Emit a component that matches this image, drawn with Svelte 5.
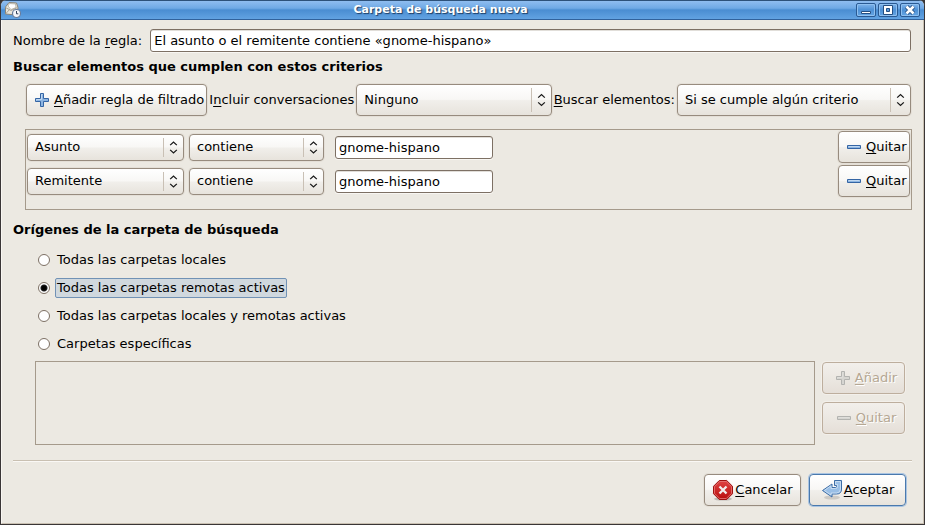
<script>
  let ruleName = $state('El asunto o el remitente contiene «gnome-hispano»');
  let thread = $state('Ninguno');
  let match = $state('Si se cumple algún criterio');
  let source = $state('remote');

  let rules = $state([
    { id: 1, field: 'Asunto', op: 'contiene', value: 'gnome-hispano' },
    { id: 2, field: 'Remitente', op: 'contiene', value: 'gnome-hispano' }
  ]);
  let nextId = 3;

  const sources = [
    { id: 'local', label: 'Todas las carpetas locales' },
    { id: 'remote', label: 'Todas las carpetas remotas activas' },
    { id: 'both', label: 'Todas las carpetas locales y remotas activas' },
    { id: 'specific', label: 'Carpetas específicas' }
  ];

  function addRule() {
    rules.push({ id: nextId++, field: 'Asunto', op: 'contiene', value: '' });
  }
  function removeRule(id) {
    rules = rules.filter((r) => r.id !== id);
  }
</script>

{#snippet arrows()}
  <svg class="arrows" width="20" height="14" viewBox="0 0 20 14" aria-hidden="true">
    <path d="M6.5 4.5 10 1.3l3.5 3.2M6.5 9.5l3.5 3.2 3.5-3.2" fill="none" stroke="#1a1a1a" stroke-width="1.4" />
  </svg>
{/snippet}

{#snippet plus()}
  <svg class="icon" width="16" height="16" viewBox="0 0 16 16" aria-hidden="true">
    <path class="sign" d="M6.5 1.5h3v5h5v3h-5v5h-3v-5h-5v-3h5z" />
    <path class="shine" d="M7.5 2.5h1M7.5 2.5v5h-5v1" />
  </svg>
{/snippet}

{#snippet minus()}
  <svg class="icon" width="16" height="16" viewBox="0 0 16 16" aria-hidden="true">
    <path class="sign" d="M1.5 6.5h13v3h-13z" />
    <path class="shine" d="M2.5 7.5h11" />
  </svg>
{/snippet}

<div class="window">
  <header class="titlebar">
    <svg class="appicon" width="18" height="18" viewBox="0 0 18 18" aria-hidden="true">
      <path d="M1.5 6 5 1.500l7.500.5 1.500 4.500-1 7.500-11.500-1z" fill="#e9e6dc" stroke="#8b8577" />
      <path d="m4 5 1.500-2.500 6 .5.500 3.500-5 2z" fill="#fff" stroke="#a9a699" stroke-width=".7" />
      <path d="M1.500 6.500 7 9.500l6.500-3M1.500 13l4-4.500" fill="none" stroke="#a19c8e" stroke-width=".9" />
      <circle cx="12.500" cy="12.500" r="4" fill="#f4f6fa" stroke="#667b9c" stroke-width="1.200" />
      <path d="M12.500 10v2.800h1.800" fill="none" stroke="#33405a" />
    </svg>
    <h1>Carpeta de búsqueda nueva</h1>
    <div class="controls">
      <button type="button" aria-label="Minimizar">
        <svg width="18" height="12" viewBox="0 0 18 12"><path d="M4.5 7.5h9v2h-9z" fill="#fff" stroke="#254f82" /></svg>
      </button>
      <button type="button" aria-label="Maximizar">
        <svg width="18" height="12" viewBox="0 0 18 12">
          <path d="M4.5 1.5h9v9h-9z" fill="#fff" stroke="#254f82" />
          <path d="M7.5 4.5h3v3h-3z" fill="#5b9bdd" stroke="#254f82" />
        </svg>
      </button>
      <button type="button" aria-label="Cerrar">
        <svg width="18" height="12" viewBox="0 0 18 12">
          <path d="m5.5 2.5 7 7m0-7-7 7" stroke="#254f82" stroke-width="4.4" />
          <path d="m5.5 2.5 7 7m0-7-7 7" stroke="#fff" stroke-width="2.6" />
        </svg>
      </button>
    </div>
  </header>

  <main>
    <div class="name-row">
      <label for="rule-name">Nombre de la <u>r</u>egla:</label>
      <input id="rule-name" type="text" bind:value={ruleName} />
    </div>

    <h2>Buscar elementos que cumplen con estos criterios</h2>

    <div class="toolbar">
      <button type="button" class="btn" onclick={addRule}>
        {@render plus()}<span><u>A</u>ñadir regla de filtrado</span>
      </button>
      <label for="thread">I<u>n</u>cluir conversaciones</label>
      <div class="combo tall thread">
        <select id="thread" bind:value={thread}>
          <option>Ninguno</option>
          <option>Todos los relacionados</option>
        </select>
        {@render arrows()}
      </div>
      <label for="match"><u>B</u>uscar elementos:</label>
      <div class="combo tall match">
        <select id="match" bind:value={match}>
          <option>Si se cumple algún criterio</option>
          <option>Si se cumplen todos los criterios</option>
        </select>
        {@render arrows()}
      </div>
    </div>

    <div class="rules">
      {#each rules as rule (rule.id)}
        <div class="rule">
          <div class="combo field">
            <select aria-label="Campo" bind:value={rule.field}>
              <option>Asunto</option>
              <option>Remitente</option>
            </select>
            {@render arrows()}
          </div>
          <div class="combo op">
            <select aria-label="Condición" bind:value={rule.op}>
              <option>contiene</option>
              <option>no contiene</option>
            </select>
            {@render arrows()}
          </div>
          <input type="text" aria-label="Valor" bind:value={rule.value} />
          <button type="button" class="btn remove" onclick={() => removeRule(rule.id)}>
            {@render minus()}<span><u>Q</u>uitar</span>
          </button>
        </div>
      {/each}
    </div>

    <h2>Orígenes de la carpeta de búsqueda</h2>

    <div class="sources" role="radiogroup" aria-label="Orígenes de la carpeta de búsqueda">
      {#each sources as s (s.id)}
        <label class="source">
          <input type="radio" name="source" value={s.id} bind:group={source} />
          <span class:active={source === s.id}>{s.label}</span>
        </label>
      {/each}
    </div>

    <div class="folders">
      <div class="list"></div>
      <div class="list-actions">
        <button type="button" class="btn" disabled={source !== 'specific'}>
          {@render plus()}<span><u>A</u>ñadir</span>
        </button>
        <button type="button" class="btn" disabled={source !== 'specific'}>
          {@render minus()}<span><u>Q</u>uitar</span>
        </button>
      </div>
    </div>

    <hr />

    <footer>
      <button type="button" class="btn">
        <svg class="dialog-icon" width="22" height="22" viewBox="0 0 22 22" aria-hidden="true">
          <defs>
            <linearGradient id="stop-red" x1="0" y1="0" x2="0" y2="1">
              <stop offset="0" stop-color="#e04444" />
              <stop offset="1" stop-color="#b80d0d" />
            </linearGradient>
          </defs>
          <ellipse cx="11" cy="20" rx="9" ry="1.6" fill="#000" opacity=".2" />
          <path d="M7.300 1.500h7.400l5.800 5.800v7.400l-5.800 5.800H7.300l-5.800-5.800V7.300z" fill="url(#stop-red)" stroke="#9c1010" />
          <path d="M7.700 2.500h6.600l5.200 5.200v6.600l-5.200 5.200H7.700l-5.200-5.200V7.700z" fill="none" stroke="#e77a7a" stroke-width=".8" />
          <path d="m7.500 7.500 7 7m0-7-7 7" stroke="#f2eeee" stroke-width="2.300" />
        </svg>
        <span><u>C</u>ancelar</span>
      </button>
      <button type="button" class="btn default">
        <svg class="dialog-icon" width="22" height="22" viewBox="0 0 22 22" aria-hidden="true">
          <ellipse cx="11" cy="18.500" rx="8" ry="2" fill="#000" opacity=".13" />
          <path d="M13.500 1.500h7v8.500q0 5-5 5h-4.500v3L1.500 11.500l9.500-6.500v3.500h3.500q1 0 1-1V6.500h-2z" fill="#9abfe6" stroke="#3d6da6" stroke-linejoin="round" />
          <path d="M14.500 5.500v-3h5v7.500q0 4-4 4H10v2l-6.700-4.500 6.700-4.700v2.700h4.500q2 0 2-2V5.500z" fill="none" stroke="#d3e3f4" stroke-width=".8" />
        </svg>
        <span><u>A</u>ceptar</span>
      </button>
    </footer>
  </main>
</div>

<style>
  :global(body) {
    background: #3a3636;
  }
  .window {
    box-sizing: border-box;
    min-height: 100vh;
    display: flex;
    flex-direction: column;
    border: solid #3a3636;
    border-width: 0 1px 1px;
    background: #ece9e2;
    border-radius: 6px 6px 0 0;
    overflow: hidden;
    color: #000;
    font: 13px/16px 'DejaVu Sans', sans-serif;
  }
  .window * {
    box-sizing: border-box;
  }
  .titlebar {
    height: 20px;
    display: grid;
    grid-template-columns: 22px 1fr 66px;
    align-items: center;
    border-top: 1px solid #2d5179;
    border-bottom: 1px solid #31629c;
    background: linear-gradient(#8fbdf0 0, #6fa9e5 40%, #4a8dd2 50%, #62a3e2 100%);
  }
  .appicon {
    margin-left: 3px;
  }
  h1 {
    margin: 0;
    text-align: center;
    font-size: 11px;
    line-height: 18px;
    font-weight: bold;
    color: #fff;
    text-shadow: 1px 1px 1px #1c3c63;
  }
  .controls {
    display: flex;
    justify-content: flex-end;
    gap: 2px;
    padding-right: 4px;
  }
  .controls button {
    width: 20px;
    height: 14px;
    display: flex;
    padding: 0;
    border: 1px solid #2a5a93;
    border-radius: 2px;
    background: linear-gradient(#7fb4ec, #4d90d5 50%, #66a6e4);
    box-shadow: inset 0 0 0 1px #8fc0f0;
  }
  main {
    flex: 1;
    padding: 9px 12px 17px 11px;
    border: solid #c9c0b2;
    border-width: 0 1px 1px;
    border-left-color: #f9f7f3;
  }
  u {
    text-underline-offset: 2px;
    text-decoration-thickness: 1px;
  }
  .name-row {
    display: flex;
    align-items: center;
    gap: 8px;
  }
  .name-row input {
    flex: 1;
  }
  input[type='text'] {
    height: 23px;
    min-width: 0;
    padding: 0 3px;
    border: 1px solid #7d7064;
    border-radius: 3px;
    background: #fff;
    box-shadow: inset 0 1px #e1ded9, 0 1px #f8f6f2;
    color: #000;
    font: inherit;
  }
  h2 {
    margin: 7px 0 9px;
    font-size: 13px;
    line-height: 16px;
    font-weight: bold;
  }
  .toolbar {
    display: flex;
    align-items: center;
    gap: 2px;
    padding-left: 13px;
    white-space: nowrap;
  }
  .btn {
    height: 32px;
    display: flex;
    align-items: center;
    gap: 4px;
    padding: 0 2px 0 7px;
    border: 1px solid #978b7e;
    border-radius: 4px;
    background: linear-gradient(#fff, #f8f7f5 48%, #f1efeb 52%, #e7e3dc);
    box-shadow: 0 0 0 1px #e4dfd7;
    color: #000;
    font: inherit;
    white-space: nowrap;
  }
  .icon {
    flex: none;
  }
  .sign {
    fill: #8db5e2;
    stroke: #3465a4;
  }
  .shine {
    fill: none;
    stroke: #c1d8f0;
  }
  .combo {
    position: relative;
    height: 27px;
    display: flex;
  }
  .combo.tall {
    height: 32px;
  }
  .combo select {
    width: 100%;
    appearance: none;
    padding: 0 24px 0 7px;
    border: 1px solid #978b7e;
    border-radius: 4px;
    background: linear-gradient(#fff, #f8f7f5 48%, #f1efeb 52%, #e7e3dc);
    box-shadow: 0 0 0 1px #e4dfd7;
    color: #000;
    font: inherit;
  }
  .arrows {
    position: absolute;
    top: 4px;
    right: 1px;
    height: calc(100% - 8px);
    border-left: 1px solid #c9c0b5;
    pointer-events: none;
  }
  .thread {
    flex: 1 1 197px;
  }
  .match {
    flex: 1 1 236px;
  }
  .rules {
    min-height: 81px;
    display: flex;
    flex-direction: column;
    gap: 2px;
    margin: 13px -1px 12px 12px;
    padding: 1px;
    border: 1px solid #a59a8b;
  }
  .rule {
    display: flex;
    align-items: center;
    gap: 5px;
  }
  .field {
    width: 157px;
  }
  .op {
    width: 135px;
    margin-right: 6px;
  }
  .rule input {
    width: 158px;
  }
  .remove {
    width: 72px;
    margin-left: auto;
  }
  .sources {
    display: flex;
    flex-direction: column;
    gap: 8px;
    margin-left: 25px;
    padding-top: 3px;
  }
  .source {
    display: flex;
    align-items: center;
    gap: 5px;
    align-self: flex-start;
  }
  .source input {
    appearance: none;
    width: 12px;
    height: 12px;
    margin: 0;
    border: 1px solid #7d7064;
    border-radius: 50%;
    background: #fff;
  }
  .source input:checked {
    background: radial-gradient(circle, #000 0 2px, #222 3px, #fff 4px);
  }
  .source span {
    padding: 1px;
    border: 1px solid transparent;
    border-radius: 2px;
  }
  .source .active {
    border-color: #7192b5;
    background: #d0d8de;
  }
  .folders {
    display: flex;
    gap: 7px;
    margin: 7px 6px 0 22px;
  }
  .list {
    flex: 1;
    min-height: 84px;
    border: 1px solid #a59a8b;
  }
  .list-actions {
    width: 83px;
    display: flex;
    flex-direction: column;
    gap: 8px;
    padding-top: 1px;
  }
  .list-actions .btn {
    justify-content: center;
  }
  .btn:disabled {
    border-color: #bdae9d;
    background: linear-gradient(#f2efeb, #ece8e2 50%, #e5dfd8);
    box-shadow: 0 0 0 1px #f3f0eb;
    color: #b5a793;
    text-shadow: 1px 1px #fff;
  }
  .btn:disabled .sign {
    fill: #d6d5d1;
    stroke: #b3b3b0;
  }
  .btn:disabled .shine {
    stroke: #dfdedb;
  }
  hr {
    height: 2px;
    margin: 15px -1px 12px 0;
    border: 0;
    border-top: 1px solid #c9c0b2;
    border-bottom: 1px solid #faf8f5;
  }
  footer {
    display: flex;
    justify-content: flex-end;
    gap: 8px;
    padding-right: 5px;
  }
  footer .btn {
    width: 97px;
    justify-content: center;
    gap: 1px;
    padding: 0;
  }
  footer .default {
    border-color: #4a79ad;
    box-shadow: 0 0 0 1px #a9c4e2;
  }
</style>
